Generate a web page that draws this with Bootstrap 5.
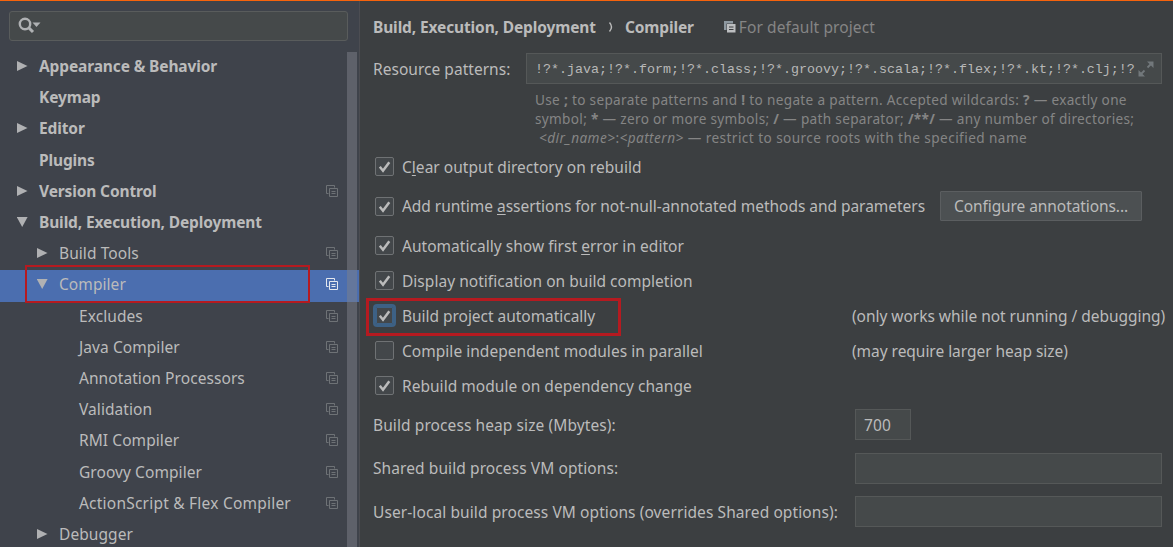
<!DOCTYPE html>
<html lang="en">
<head>
<meta charset="utf-8">
<title>Settings</title>
<link href="https://cdn.jsdelivr.net/npm/bootstrap@5.3.0/dist/css/bootstrap.min.css" rel="stylesheet">
<style>
body{font-family:"Noto Sans",sans-serif;font-size:15.5px;line-height:20px;letter-spacing:.03px;color:#bbb;background:#3c3f41}
b,strong{font-weight:700}
.app{height:547px;border-top:1px solid #f7630c;white-space:nowrap}
.side{width:360px;background:#3f434b;border-right:1px solid #4c4d52}
.search{margin:10px 11px 0 9px;height:30px;background:#45494a;border:1px solid #595c5c;border-radius:3px;padding-left:7px}
.tree{margin-top:11px}
.node{height:31.2px;padding-right:21px;padding-bottom:3px;letter-spacing:.07px}
.node.fw-bold{letter-spacing:-.13px}
.node .copy{color:#6e7276}
.lvl0{padding-left:17px}.lvl1{padding-left:37px}.lvl2{padding-left:79px}
.arrow{width:22px;height:12px;flex:none;fill:#b0b1b3}
.node.sel{background:#4b6eaf}
.node.sel .copy{color:#e4e8ef}
.thumb{right:2px;top:51px;bottom:0;width:10px;background:#7d808a;opacity:.5}
.callout{border:2px solid #b51a20;pointer-events:none}
.callout-tree{left:25px;top:264px;width:285px;height:38px}
.callout-check{left:-7px;top:0;width:255px;height:38px;border-width:3px}
.pane{padding-left:13px;width:813px}
.crumbs{height:52px;letter-spacing:-.13px}
.crumbs .sub{color:#858585;letter-spacing:.1px}
.scope{margin:0 3px 0 30px}
.field{background:#45494a;border:1px solid #555858;height:31px}
.patterns{width:636px;padding:0 7px 0 8px}
.mono{font-family:"Liberation Mono",monospace;font-size:13.33px;letter-spacing:0;color:#b8b8b8;padding-top:2px}
.hint{font-size:13.6px;line-height:18.8px;letter-spacing:.32px;color:#858585;padding:7px 0 0 162px;height:65px}
.hint .last{letter-spacing:.44px}
.opt{height:35px}
.opt.tall{height:44px}
.opt .note{position:absolute;left:479px}
.chk{width:19px;height:19px;border:1px solid #6f7274;border-radius:2px;background:#43474a;margin:0 8px 0 2px;flex:none}
.chk.focus{border-color:#3d6185;box-shadow:0 0 0 2px #3d6185,inset 0 0 0 1px #3d6185}
u{text-underline-offset:2px}
.conf{height:30px;width:202px;font-size:inherit;line-height:20px;background:#4c5052;border:1px solid #5b5e60;border-radius:1px;margin-left:15px;letter-spacing:-.08px}
.wide{letter-spacing:.09px}
.wider{letter-spacing:.22px}
.tight{letter-spacing:-.035px}
.form-rows{row-gap:12.7px;margin-top:6px}
.lead-label{width:153px}
.vm{width:482px;flex:none}
.w-heap{width:56px}
.w-vm{width:307px}
</style>
</head>
<body>
<svg class="d-none">
<symbol id="copy" viewBox="0 0 12 12"><path d="M2.500 8.500H.5v-8h8v2M3.500 3.500h8v8h-8zM5.500 6.500h4M5.500 8.500h4" fill="none" stroke="currentColor"/></symbol>
<symbol id="right" viewBox="0 0 22 12"><path d="M0 1 10.500 6 0 11z"/></symbol>
<symbol id="down" viewBox="0 0 22 12"><path d="M-.3 1H10.600L5.200 11z"/></symbol>
<symbol id="tick" viewBox="0 0 17 17"><path d="M3.800 8.800 7 12.800 13.300 4.200" fill="none" stroke="#bbb" stroke-width="2.500"/></symbol>
</svg>
<div class="app d-flex overflow-hidden">
<aside class="side position-relative flex-shrink-0">
  <div class="search d-flex align-items-center"><svg width="26" height="20" viewBox="0 0 26 20"><circle cx="8" cy="8" r="5.200" fill="none" stroke="#afb1b3" stroke-width="2.400"/><path d="M11.500 11.500 16 16" stroke="#afb1b3" stroke-width="3"/><path d="M15.500 6.500h8l-4 4.500z" fill="#afb1b3"/></svg></div>
  <div class="tree">
    <div class="node lvl0 d-flex align-items-center fw-bold"><svg class="arrow"><use href="#right"/></svg><span>Appearance &amp; Behavior</span></div>
    <div class="node lvl0 d-flex align-items-center fw-bold"><span class="arrow"></span><span>Keymap</span></div>
    <div class="node lvl0 d-flex align-items-center fw-bold"><svg class="arrow"><use href="#right"/></svg><span>Editor</span></div>
    <div class="node lvl0 d-flex align-items-center fw-bold"><span class="arrow"></span><span>Plugins</span></div>
    <div class="node lvl0 d-flex align-items-center fw-bold"><svg class="arrow"><use href="#right"/></svg><span>Version Control</span><svg class="copy ms-auto" width="12" height="12"><use href="#copy"/></svg></div>
    <div class="node lvl0 d-flex align-items-center fw-bold"><svg class="arrow"><use href="#down"/></svg><span>Build, Execution, Deployment</span></div>
    <div class="node lvl1 d-flex align-items-center"><svg class="arrow"><use href="#right"/></svg><span>Build Tools</span><svg class="copy ms-auto" width="12" height="12"><use href="#copy"/></svg></div>
    <div class="node lvl1 sel d-flex align-items-center"><svg class="arrow"><use href="#down"/></svg><span>Compiler</span><svg class="copy ms-auto" width="12" height="12"><use href="#copy"/></svg></div>
    <div class="node lvl2 d-flex align-items-center"><span>Excludes</span><svg class="copy ms-auto" width="12" height="12"><use href="#copy"/></svg></div>
    <div class="node lvl2 d-flex align-items-center"><span>Java Compiler</span><svg class="copy ms-auto" width="12" height="12"><use href="#copy"/></svg></div>
    <div class="node lvl2 d-flex align-items-center"><span>Annotation Processors</span><svg class="copy ms-auto" width="12" height="12"><use href="#copy"/></svg></div>
    <div class="node lvl2 d-flex align-items-center"><span>Validation</span><svg class="copy ms-auto" width="12" height="12"><use href="#copy"/></svg></div>
    <div class="node lvl2 d-flex align-items-center"><span>RMI Compiler</span><svg class="copy ms-auto" width="12" height="12"><use href="#copy"/></svg></div>
    <div class="node lvl2 d-flex align-items-center"><span>Groovy Compiler</span><svg class="copy ms-auto" width="12" height="12"><use href="#copy"/></svg></div>
    <div class="node lvl2 d-flex align-items-center"><span class="wider">ActionScript &amp; Flex Compiler</span><svg class="copy ms-auto" width="12" height="12"><use href="#copy"/></svg></div>
    <div class="node lvl1 d-flex align-items-center"><svg class="arrow"><use href="#right"/></svg><span>Debugger</span></div>
  </div>
  <div class="thumb position-absolute"></div>
  <div class="callout callout-tree position-absolute"></div>
</aside>
<main class="pane">
  <div class="crumbs d-flex align-items-center">
    <strong>Build, Execution, Deployment</strong>
    <svg width="29" height="14" viewBox="0 0 29 14"><path d="M13.500 2.500Q17.500 7 13.500 11.500" fill="none" stroke="#bbb" stroke-width="1.400"/></svg>
    <strong>Compiler</strong>
    <svg class="scope flex-shrink-0" width="12" height="12" viewBox="0 0 12 12"><path d="M0 0h9v3H3v6H0z" fill="#8d98a0"/><path d="M2.500 2.500H12V12H2.500z" fill="#3c3f41"/><path d="M3 3h8.500v8.500H3z" fill="#bcbec0"/><path d="M5 6h4.500M5 8.500h4.500" stroke="#3c3f41"/></svg>
    <span class="sub">For default project</span>
  </div>
  <div class="d-flex align-items-center">
    <label class="lead-label">Resource patterns:</label>
    <div class="field patterns d-flex align-items-center justify-content-between"><span class="mono">!?*.java;!?*.form;!?*.class;!?*.groovy;!?*.scala;!?*.flex;!?*.kt;!?*.clj;!?</span>
    <svg class="flex-shrink-0" width="16" height="16" viewBox="0 0 16 16" fill="#72787b"><path d="M9 0.500H15.500v6.500zM0.500 9v6.500h6.500z"/><path d="M9.500 6.500l4-4M2.500 13.500l4-4" stroke="#72787b" stroke-width="1.800"/></svg></div>
  </div>
  <div class="hint">
    <div>Use <b>;</b> to separate patterns and <b>!</b> to negate a pattern. Accepted wildcards: <b>?</b> — exactly one</div>
    <div>symbol; <b>*</b> — zero or more symbols; <b>/</b> — path separator; <b>/**/</b> — any number of directories;</div>
    <div class="last ps-1"><i>&lt;dir_name&gt;</i>:<i>&lt;pattern&gt;</i> — restrict to source roots with the specified name</div>
  </div>
  <div class="opt d-flex align-items-center"><span class="chk d-flex"><svg width="17" height="17"><use href="#tick"/></svg></span><span>C<u>l</u>ear output directory on rebuild</span></div>
  <div class="opt tall d-flex align-items-center"><span class="chk d-flex"><svg width="17" height="17"><use href="#tick"/></svg></span><span class="tight">Add runtime <u>a</u>ssertions for not-null-annotated methods and parameters</span><button class="conf btn p-0 text-reset">Configure annotations...</button></div>
  <div class="opt d-flex align-items-center"><span class="chk d-flex"><svg width="17" height="17"><use href="#tick"/></svg></span><span>Automatically show first <u>e</u>rror in editor</span></div>
  <div class="opt d-flex align-items-center"><span class="chk d-flex"><svg width="17" height="17"><use href="#tick"/></svg></span><span>Display notification on build completion</span></div>
  <div class="opt d-flex align-items-center position-relative"><span class="chk focus d-flex"><svg width="17" height="17"><use href="#tick"/></svg></span><span class="tight">Build project automatically</span><span class="note tight">(only works while not running / debugging)</span><div class="callout callout-check position-absolute"></div></div>
  <div class="opt d-flex align-items-center position-relative"><span class="chk"></span><span>Compile independent modules in parallel</span><span class="note tight">(may require larger heap size)</span></div>
  <div class="opt d-flex align-items-center"><span class="chk d-flex"><svg width="17" height="17"><use href="#tick"/></svg></span><span>Rebuild module on dependency change</span></div>
  <div class="form-rows d-grid wide">
    <div class="d-flex align-items-center"><label class="vm">Build process heap size (Mbytes):</label><div class="field w-heap d-flex align-items-center ps-2">700</div></div>
    <div class="d-flex align-items-center"><label class="vm">Shared build process VM options:</label><input class="field w-vm" aria-label="Shared options"></div>
    <div class="d-flex align-items-center"><label class="vm">User-local build process VM options (overrides Shared options):</label><input class="field w-vm" aria-label="User-local options"></div>
  </div>
</main>
</div>
<script src="https://cdn.jsdelivr.net/npm/bootstrap@5.3.0/dist/js/bootstrap.bundle.min.js"></script>
</body>
</html>
